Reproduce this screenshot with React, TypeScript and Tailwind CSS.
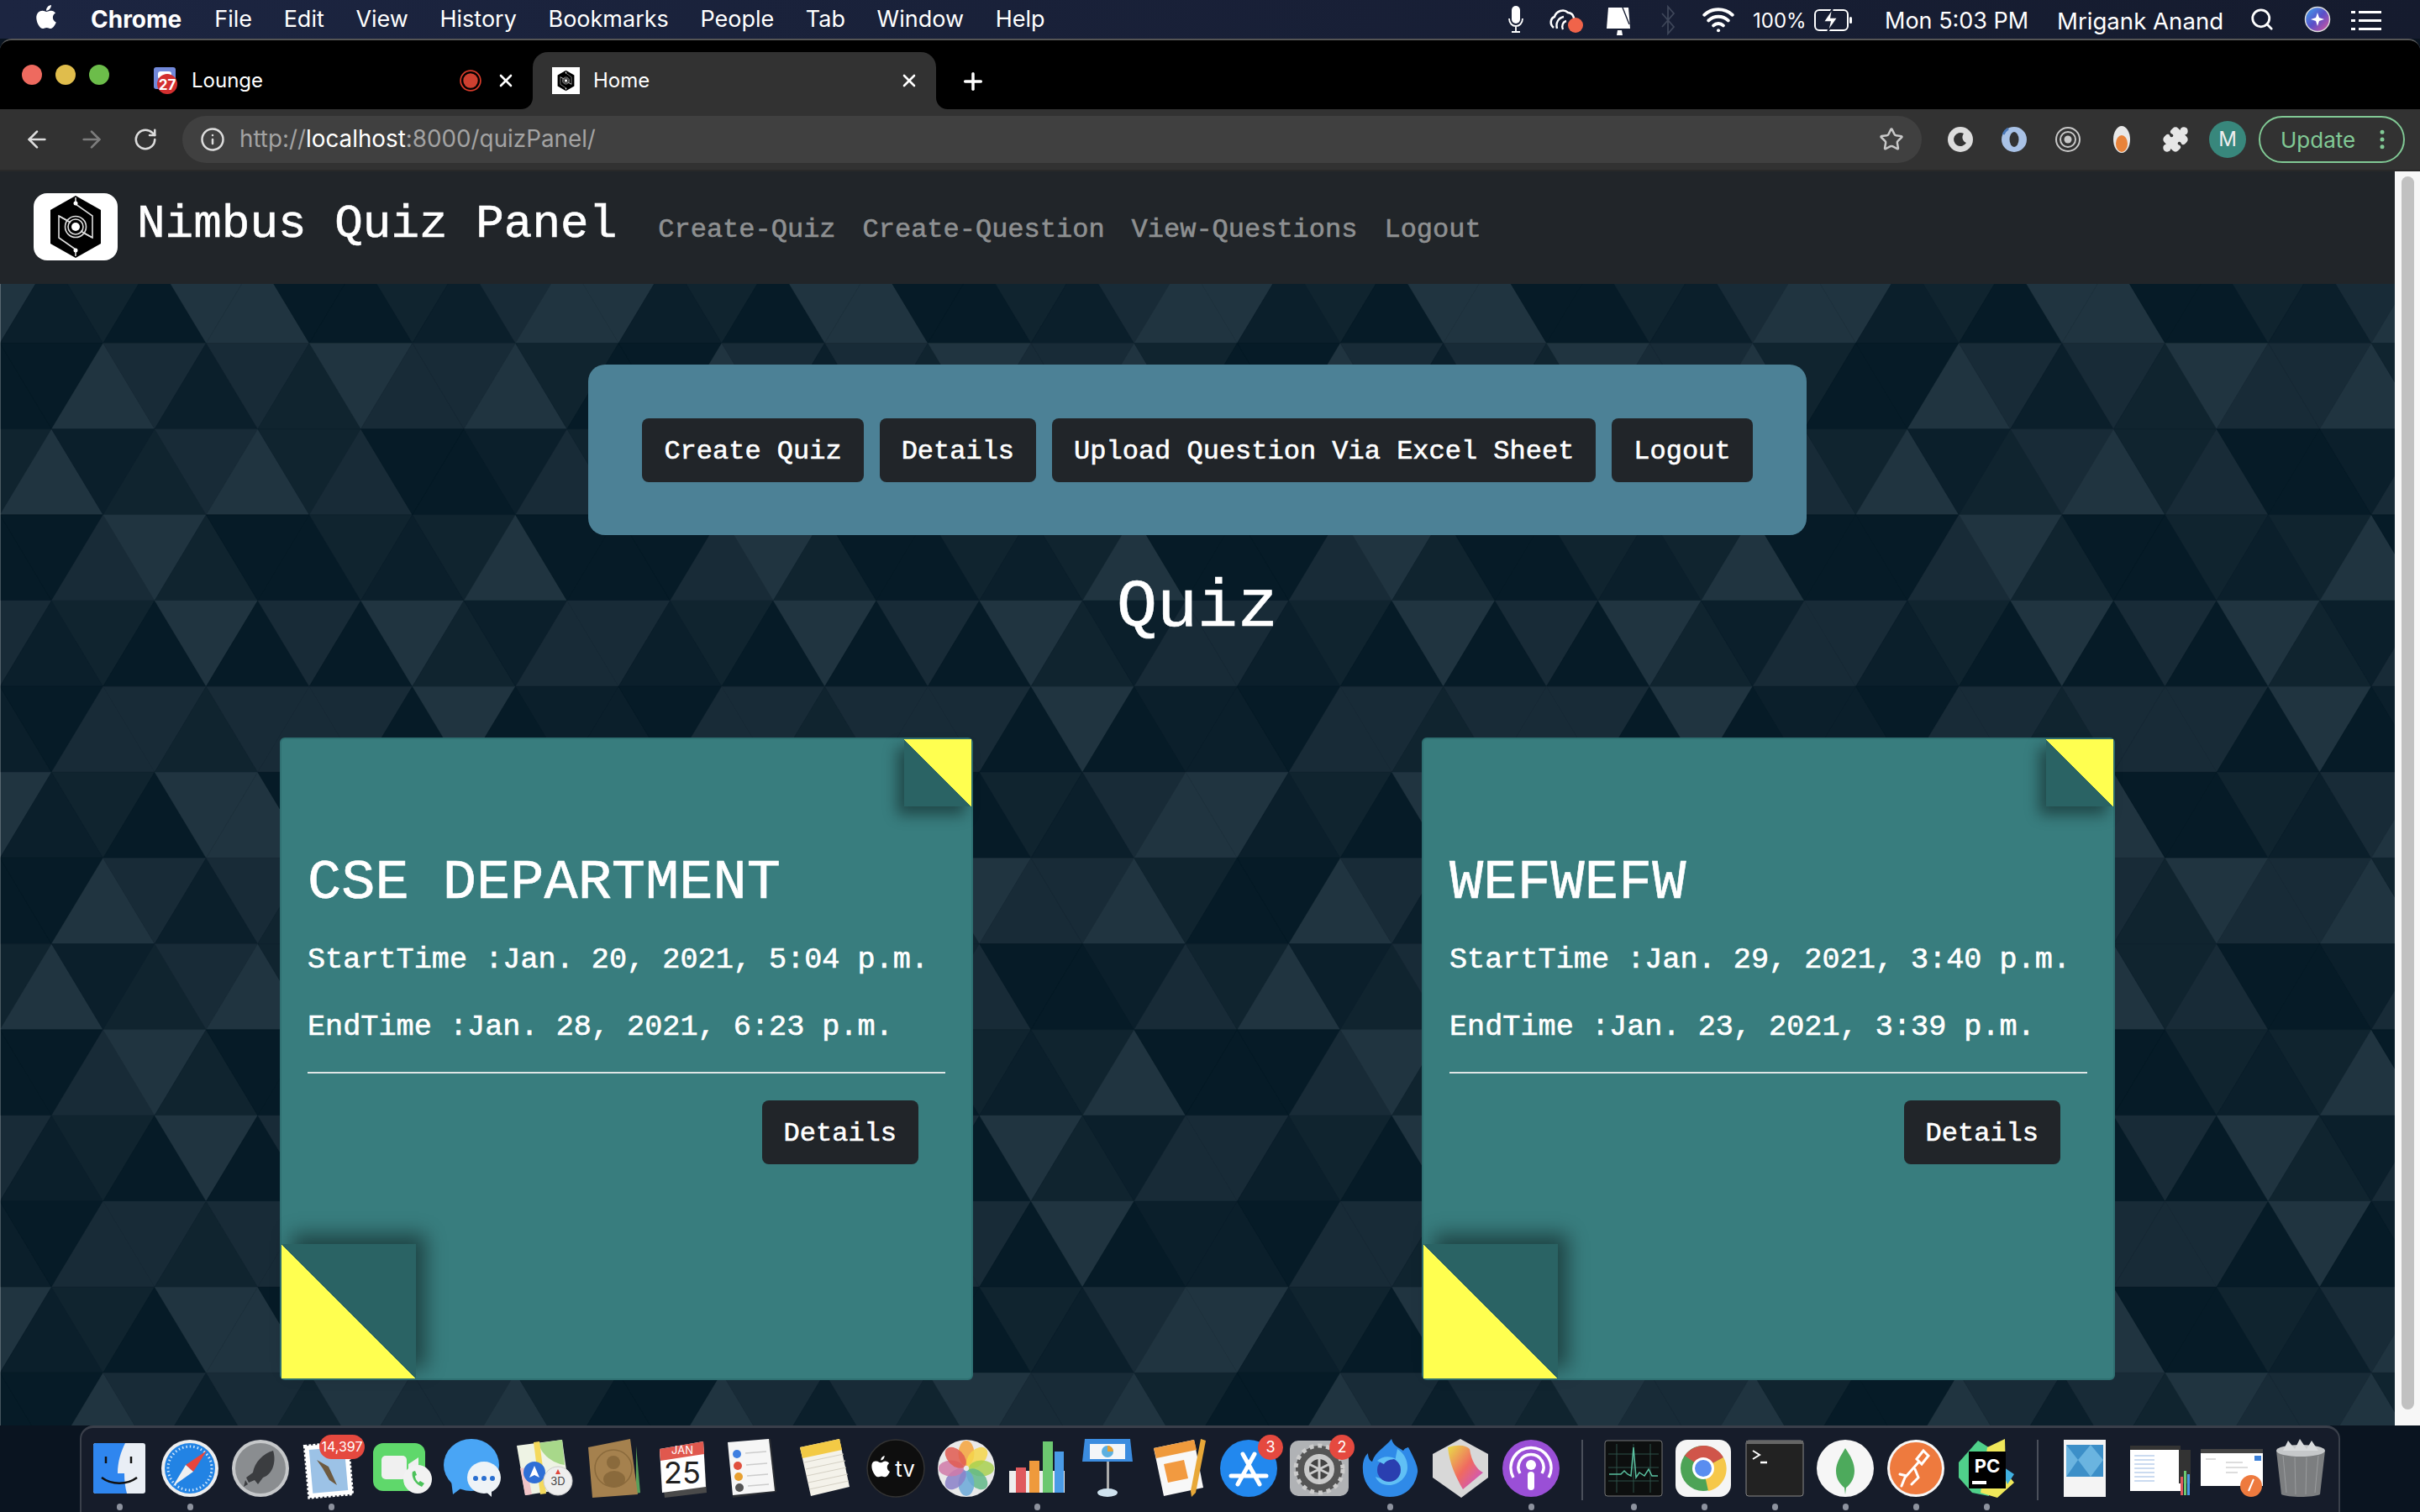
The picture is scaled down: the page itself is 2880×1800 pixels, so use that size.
import { ReactNode } from "react";
import { FaApple } from "react-icons/fa";
import { ArrowLeft, ArrowRight, Info, MoreVertical, Plus, Puzzle, RotateCw, Search, Star, Wifi, X } from "lucide-react";

// background tile: 6 rows of 12 triangles, repeats every 736 x 613
const TONES = ["#061b27", "#0b1f2b", "#10242f", "#182b37", "#203440"];
const TILE = [
  [4, 1, 2, 0, 4, 4, 0, 0, 2, 1, 3, 4],
  [0, 0, 4, 3, 1, 3, 2, 4, 3, 3, 4, 2],
  [2, 4, 1, 2, 3, 4, 2, 3, 0, 0, 1, 3],
  [0, 0, 3, 4, 2, 0, 0, 2, 1, 2, 4, 0],
  [3, 1, 2, 0, 4, 0, 3, 0, 4, 2, 1, 3],
  [1, 0, 3, 3, 2, 3, 3, 3, 0, 4, 0, 1],
];
const HALF = 61.35;
const ROW = 102.15;

function Triangles() {
  const polys = [];
  for (let r = 0; r < 15; r++) {
    const y = -31.6 + r * ROW;
    for (let c = -1; c < 49; c++) {
      const tone = TILE[r % 6][((c % 12) + 12) % 12];
      const odd = c % 2 !== 0;
      const pointsUp = r % 2 === 1 ? !odd : odd;
      const x = c * HALF;
      const pts = pointsUp
        ? `${x},${y} ${x - HALF},${y + ROW} ${x + HALF},${y + ROW}`
        : `${x - HALF},${y} ${x + HALF},${y} ${x},${y + ROW}`;
      polys.push(<polygon key={`${r}-${c}`} points={pts} fill={TONES[tone]} stroke={TONES[tone]} strokeWidth={0.4} />);
    }
  }
  return (
    <svg className="absolute inset-0 h-full w-full" aria-hidden="true">
      {polys}
    </svg>
  );
}

function NimbusLogo({ className }: { className: string }) {
  return (
    <svg viewBox="0 0 100 80" className={className}>
      <polygon points="50,3 80,20 80,60 50,77 20,60 20,20" fill="#000" />
      <g fill="none" stroke="#ddd" strokeWidth="1.6">
        <path d="M50 5v8l20 14v26l-11-6M50 75v-8L30 53V27l11 6" />
        <circle cx="50" cy="40" r="9" />
        <circle cx="50" cy="40" r="12.5" />
        <path d="M30 27l14 8M70 53L56 45" />
      </g>
      <circle cx="50" cy="40" r="5" fill="#fff" />
      <circle cx="50" cy="12" r="2.5" fill="#fff" />
      <circle cx="50" cy="68" r="2.5" fill="#fff" />
    </svg>
  );
}

function MenuIcons() {
  return (
    <>
      <svg viewBox="0 0 24 34" className="h-[34px] w-[24px] absolute left-[1792px] top-[6px]">
        <rect x="7" y="1" width="10" height="21" rx="5" fill="#fff" />
        <path d="M4 16c0 6 4 9 8 9s8-3 8-9M12 25v6M7 32h10" fill="none" stroke="#fff" strokeWidth="1.8" />
      </svg>
      <svg viewBox="0 0 44 34" className="h-[34px] w-[44px] absolute left-[1843px] top-[7px]">
        <path d="M6 26c-5-4-4-11 1-13 2-7 11-10 16-5 5 0 8 5 7 10" fill="none" stroke="#fff" strokeWidth="2.6" />
        <path d="M10 27c-2-7 2-13 8-14M17 28c-2-4 0-9 4-10" fill="none" stroke="#fff" strokeWidth="2.4" />
        <circle cx="32" cy="23" r="9" fill="#f0644a" />
      </svg>
      <svg viewBox="0 0 36 36" className="h-[36px] w-[36px] absolute left-[1909px] top-[6px]">
        <path d="M5 3h24l2 25H3z" fill="#fff" />
        <path d="M22 3l8 20" stroke="#1a2136" strokeWidth="1.4" />
        <path d="M16 30h5l1 6h-7z" fill="#fff" />
      </svg>
      <svg viewBox="0 0 20 36" className="h-[36px] w-[20px] absolute left-[1975px] top-[6px]">
        <path d="M3 10l14 16-7 8V2l7 8L3 26" fill="none" stroke="#3e4659" strokeWidth="1.8" />
      </svg>
      <Wifi size={40} strokeWidth={2.4} className="absolute left-[2025px] top-[3px] text-white" />
      <svg viewBox="0 0 46 30" className="h-[30px] w-[46px] absolute left-[2159px] top-[9px]">
        <rect x="1" y="3" width="39" height="24" rx="5" fill="none" stroke="#fff" strokeWidth="2" />
        <rect x="42" y="11" width="3" height="8" rx="1.5" fill="#fff" />
        <path d="M22 1L11 17h8l-3 12 12-17h-8z" fill="#fff" stroke="#1a2136" strokeWidth="1.6" />
      </svg>
      <Search size={30} strokeWidth={2.2} className="absolute left-[2677px] top-[8px] text-white" />
      <svg viewBox="0 0 32 32" className="h-[32px] w-[32px] absolute left-[2742px] top-[7px]">
        <defs>
          <linearGradient id="siri" x1="0" y1="0" x2="1" y2="1">
            <stop offset="0" stopColor="#3ea8f0" />
            <stop offset="0.5" stopColor="#5a4fc8" />
            <stop offset="1" stopColor="#e0559a" />
          </linearGradient>
        </defs>
        <circle cx="16" cy="16" r="14.5" fill="url(#siri)" stroke="#ddd" strokeWidth="1.5" />
        <path d="M16 8l2 6 6 2-6 2-2 6-2-6-6-2 6-2z" fill="#fff" />
      </svg>
      <svg viewBox="0 0 36 28" className="h-[28px] w-[36px] absolute left-[2798px] top-[11px]">
        <path d="M0 2h5v3H0zM9 2h27v3H9zM0 12h5v3H0zM9 12h27v3H9zM0 22h5v3H0zM9 22h27v3H9z" fill="#fff" />
      </svg>
    </>
  );
}

function MenuBar() {
  return (
    <div className="relative flex h-[46px] items-center bg-gradient-to-r from-[#1c2541] to-[#151b2e] pl-[39px] font-['Inter',sans-serif] text-[27px] text-white">
      <FaApple size={32} className="mr-[37px] -mt-[6px]" />
      <div className="mr-[39px] text-[28px] font-bold">Chrome</div>
      <div className="flex gap-[37.6px]">
        {["File", "Edit", "View", "History", "Bookmarks", "People", "Tab", "Window", "Help"].map((m) => (
          <span key={m}>{m}</span>
        ))}
      </div>
      <MenuIcons />
      <span className="absolute left-[2086px] top-[7px] text-[24px]">100%</span>
      <span className="absolute left-[2243px] top-[5px]">Mon 5:03 PM</span>
      <span className="absolute left-[2448px] top-[5px] text-[27.6px]">Mrigank Anand</span>
    </div>
  );
}

function TabBar() {
  return (
    <div className="flex h-[82px] items-end bg-black font-['Inter',sans-serif] text-[24px] text-white">
      <div className="flex h-full w-[182px] shrink-0 items-center gap-[16px] pl-[26px] pb-[0px]">
        <span className="h-[24px] w-[24px] rounded-full bg-[#ee6a5f]" />
        <span className="h-[24px] w-[24px] rounded-full bg-[#e0bd4c]" />
        <span className="h-[24px] w-[24px] rounded-full bg-[#6cbd4a]" />
      </div>
      <div className="flex h-[68px] w-[452px] shrink-0 items-center pr-[20px]">
        <svg viewBox="0 0 30 32" className="h-[32px] w-[30px] shrink-0">
          <rect x="1" y="0" width="26" height="26" rx="3" fill="#7289da" />
          <rect x="6" y="5" width="16" height="9" rx="3" fill="#fff" />
          <circle cx="17" cy="20" r="12" fill="#d32f2f" />
          <text x="17" y="27" textAnchor="middle" fontSize="17" fontWeight="700" fill="#fff">27</text>
        </svg>
        <span className="ml-[16px] flex-1">Lounge</span>
        <svg viewBox="0 0 24 24" className="h-[26px] w-[26px]">
          <circle cx="12" cy="12" r="11" fill="none" stroke="#d63b2a" strokeWidth="1.6" />
          <circle cx="12" cy="12" r="8" fill="#cf4030" />
        </svg>
        <X size={24} strokeWidth={2.6} className="ml-[17px]" />
      </div>
      <div className="relative flex h-[68px] w-[480px] shrink-0 items-center rounded-t-[18px] bg-[#323232] pl-[23px] pr-[20px]">
        <svg viewBox="0 0 14 14" className="absolute -left-[14px] bottom-0 h-[14px] w-[14px]">
          <path d="M14 0v14H0C8 14 14 8 14 0z" fill="#323232" />
        </svg>
        <svg viewBox="0 0 14 14" className="absolute -right-[14px] bottom-0 h-[14px] w-[14px]">
          <path d="M0 0v14h14C6 14 0 8 0 0z" fill="#323232" />
        </svg>
        <div className="h-[32px] w-[33px] shrink-0 bg-white">
          <NimbusLogo className="h-full w-full" />
        </div>
        <span className="ml-[16px] flex-1">Home</span>
        <X size={24} strokeWidth={2.6} />
      </div>
      <Plus size={32} strokeWidth={2.6} className="mb-[17px] ml-[28px]" />
    </div>
  );
}

function ExtensionIcons() {
  return (
    <>
      <svg viewBox="0 0 32 32" className="h-[32px] w-[32px] shrink-0">
        <circle cx="16" cy="16" r="15" fill="#dcdcdc" />
        <path d="M20 9a8 8 0 1 0 3 11 7 7 0 0 1-3-11z" fill="#323232" />
      </svg>
      <svg viewBox="0 0 32 32" className="h-[32px] w-[32px] shrink-0">
        <circle cx="16" cy="16" r="15" fill="#a9c2e6" />
        <ellipse cx="16" cy="16" rx="5.5" ry="9" fill="#323232" />
        <path d="M3 10a15 15 0 0 1 6-7" stroke="#4a78b8" strokeWidth="3" fill="none" />
      </svg>
      <svg viewBox="0 0 32 32" className="h-[32px] w-[32px] shrink-0">
        <g fill="none" stroke="#c8c8c8" strokeWidth="2">
          <circle cx="16" cy="16" r="14" />
          <circle cx="16" cy="16" r="9" />
        </g>
        <circle cx="16" cy="16" r="4.5" fill="#c8c8c8" />
      </svg>
      <svg viewBox="0 0 32 34" className="h-[34px] w-[32px] shrink-0">
        <ellipse cx="16" cy="17" rx="10" ry="16" fill="#e8e8e8" />
        <ellipse cx="16" cy="22" rx="7" ry="10" fill="#e8833a" />
      </svg>
      <Puzzle size={32} fill="#e6e6e6" stroke="#e6e6e6" className="shrink-0" />
    </>
  );
}

function Toolbar() {
  return (
    <div className="flex h-[74px] items-center border-b-2 border-[#292929] bg-[#323232] font-['Inter',sans-serif]">
      <div className="flex w-[217px] shrink-0 items-center gap-[33px] pl-[28px]">
        <ArrowLeft size={32} className="text-[#dcdcdc]" />
        <ArrowRight size={32} className="text-[#7d7d7d]" />
        <RotateCw size={30} className="text-[#dcdcdc]" />
      </div>
      <div className="flex h-[56px] w-[2070px] shrink-0 items-center rounded-full bg-[#404040] pl-[21px] pr-[21px]">
        <Info size={30} className="text-[#dcdcdc]" />
        <div className="ml-[17px] flex-1 text-[27.8px] text-[#a3a3a3]">
          http://<span className="text-white">localhost</span>:8000/quizPanel/
        </div>
        <Star size={30} className="text-[#c8c8c8]" />
      </div>
      <div className="ml-[30px] flex w-[316px] shrink-0 items-center gap-[32px]">
        <ExtensionIcons />
      </div>
      <div className="flex h-[44px] w-[44px] shrink-0 items-center justify-center rounded-full bg-[#38877c] text-[24px] text-[#eee] -ml-[4px]">M</div>
      <div className="ml-[15px] flex h-[56px] w-[174px] shrink-0 items-center justify-between rounded-full border-2 border-[#81c995] pl-[24px] pr-[10px] text-[26px] text-[#81c995]">
        Update
        <MoreVertical size={30} />
      </div>
    </div>
  );
}

function DarkButton({ children }: { children: ReactNode }) {
  return (
    <button className="flex h-[76px] items-center whitespace-nowrap rounded-lg bg-[#212529] px-[26px] pt-[4px] text-[32px] leading-[48px] text-white">
      {children}
    </button>
  );
}

function QuizCard({ name, start, end }: { name: string; start: string; end: string }) {
  return (
    <div className="relative h-[765px] w-[825px] rounded-md border-2 border-[#2f7072] bg-[#387d7e] px-[31px] pt-[131px]">
      <div className="absolute right-0 top-0 h-[80px] w-[80px] bg-[linear-gradient(45deg,#2a6364_50%,#ffff50_50%)] shadow-[-8px_10px_16px_rgba(0,0,0,0.42)]" />
      <div className="absolute bottom-0 left-0 h-[160px] w-[160px] bg-[linear-gradient(45deg,#ffff50_50%,#2a6364_50%)] shadow-[12px_-12px_22px_rgba(0,0,0,0.45)]" />
      <h2 className="text-[67px] leading-[80px] text-white">{name}</h2>
      <p className="mt-[30px] text-[35.2px] leading-[44px] text-white">StartTime :{start}</p>
      <p className="mt-[36px] text-[35.2px] leading-[44px] text-white">EndTime :{end}</p>
      <div className="mt-[31px] h-[2px] bg-[#dfe6e6]" />
      <div className="mt-[32px] flex justify-end pr-[32px]">
        <DarkButton>Details</DarkButton>
      </div>
    </div>
  );
}

function Page() {
  return (
    <div className="relative flex min-h-0 min-w-0 flex-1 flex-col overflow-hidden">
      <Triangles />
      <div className="absolute inset-y-0 left-0 w-px bg-white/25" />
      <div className="relative flex flex-col items-center">
        <div className="mt-[96px] flex gap-[19px] rounded-[20px] bg-[#4c8196] p-[64px] pb-[63px]">
          <DarkButton>Create Quiz</DarkButton>
          <DarkButton>Details</DarkButton>
          <DarkButton>Upload Question Via Excel Sheet</DarkButton>
          <DarkButton>Logout</DarkButton>
        </div>
        <h1 className="mt-[39px] text-[80px] leading-[96px] text-white">Quiz</h1>
        <div className="mt-[106px] flex justify-center gap-[534px]">
          <QuizCard name="CSE DEPARTMENT" start="Jan. 20, 2021, 5:04 p.m." end="Jan. 28, 2021, 6:23 p.m." />
          <QuizCard name="WEFWEFW" start="Jan. 29, 2021, 3:40 p.m." end="Jan. 23, 2021, 3:39 p.m." />
        </div>
      </div>
    </div>
  );
}

function Nav() {
  return (
    <div className="flex h-[134px] shrink-0 items-start bg-[#212529]">
      <div className="ml-[40px] mt-[26px] h-[80px] w-[100px] rounded-[16px] bg-white">
        <NimbusLogo className="h-full w-full" />
      </div>
      <div className="ml-[23px] mt-[31px] text-[56px] leading-[64px] text-white">Nimbus Quiz Panel</div>
      <div className="ml-[49px] mt-[46px] flex gap-[32px] text-[32px] leading-[48px] text-[#8e9091]">
        <span>Create-Quiz</span>
        <span>Create-Question</span>
        <span>View-Questions</span>
        <span>Logout</span>
      </div>
    </div>
  );
}

// dock icons, all on a 70 x 70 box
const DOCK_ICONS: Record<string, ReactNode> = {
  finder: (
    <>
      <rect x="4" y="5" width="62" height="60" rx="3" fill="#e9eef5" />
      <path d="M7 5h35c-5 10-9 22-9 36h8c0 9 1 17 3 24H7a3 3 0 0 1-3-3V8a3 3 0 0 1 3-3z" fill="#2f86ef" />
      <path d="M19 21v8M49 21v8" stroke="#111" strokeWidth="2.5" />
      <path d="M14 46c12 9 30 9 42 0" stroke="#111" strokeWidth="2.5" fill="none" />
    </>
  ),
  safari: (
    <>
      <circle cx="35" cy="35" r="34" fill="#eee" />
      <circle cx="35" cy="35" r="30" fill="#2283e4" />
      <circle cx="35" cy="35" r="26" fill="none" stroke="#cfe6fb" strokeWidth="3" strokeDasharray="1.5 3" />
      <path d="M55 14L30 31l9 8z" fill="#e8453c" />
      <path d="M15 56l15-25 9 8z" fill="#f1f1f1" />
    </>
  ),
  launchpad: (
    <>
      <circle cx="35" cy="35" r="34" fill="#c6c8ca" />
      <circle cx="35" cy="35" r="30" fill="#8a8d90" />
      <path d="M50 14c-12 3-22 14-24 26l-8 6 3 6 7-3 4 5 6-8c12-4 16-20 12-32zM20 54l-5 3 2-8z" fill="#3b3d40" />
    </>
  ),
  mail: (
    <>
      <rect x="6" y="6" width="52" height="62" fill="#fff" stroke="#fff" strokeWidth="3" strokeDasharray="3 2" transform="rotate(-5 32 37)" />
      <rect x="11" y="11" width="42" height="52" fill="#9cc2e6" transform="rotate(-5 32 37)" />
      <path d="M18 25l14 8 10 22-9-6-8-14z" fill="#6d5a40" />
      <rect x="21" y="-5" width="54" height="29" rx="14.5" fill="#e5493f" />
      <text x="48" y="15" textAnchor="middle" fontSize="16" fill="#fff">14,397</text>
    </>
  ),
  facetime: (
    <>
      <rect x="1" y="5" width="62" height="57" rx="12" fill="#5fd86b" />
      <rect x="11" y="20" width="30" height="28" rx="5" fill="#f0f0f0" />
      <path d="M43 30l12-8v24l-12-8z" fill="#f0f0f0" />
      <circle cx="54" cy="48" r="17" fill="#f2f2f2" />
      <path d="M48 39c-2 6 3 15 11 18l3-4-5-3-2 2c-2-2-4-5-4-8l2-1-2-5z" fill="#4cc25a" />
    </>
  ),
  messages: (
    <>
      <ellipse cx="34" cy="31" rx="33" ry="31" fill="#49a5f5" />
      <path d="M10 50l2 16 12-9z" fill="#49a5f5" />
      <ellipse cx="49" cy="46" rx="20" ry="19" fill="#eef3f7" />
      <path d="M48 60l10 9v-13z" fill="#eef3f7" />
      <g fill="#2a6fd0"><circle cx="39" cy="47" r="3" /><circle cx="49" cy="47" r="3" /><circle cx="59" cy="47" r="3" /></g>
    </>
  ),
  maps: (
    <>
      <path d="M4 8l54-7 8 58-52 8z" fill="#eef3e4" />
      <path d="M30 5l28-4 3 30c-14-2-28-12-31-26z" fill="#a8d88a" />
      <path d="M8 35l8-1 6 32-8 1z" fill="#f2c4c8" />
      <path d="M24 4l7-1 8 62-7 1z" fill="#f4d95c" />
      <circle cx="25" cy="40" r="13" fill="#2f6fd6" />
      <path d="M25 32l6 14-6-3-6 3z" fill="#fff" />
      <circle cx="53" cy="50" r="17" fill="#eee" stroke="#ccc" />
      <path d="M53 36l3 6h-6z" fill="#e0453a" />
      <text x="53" y="55" textAnchor="middle" fontSize="13" fill="#444">3D</text>
    </>
  ),
  contacts: (
    <>
      <path d="M62 8l5 56-5 1z" fill="#58a05a" />
      <path d="M5 10L55 0l9 66-54 4z" fill="#a5814e" />
      <circle cx="35" cy="28" r="8" fill="#8a6a3c" />
      <ellipse cx="36" cy="48" rx="13" ry="10" fill="#8a6a3c" />
      <circle cx="35" cy="35" r="22" fill="none" stroke="#8a6a3c" strokeWidth="1.5" />
    </>
  ),
  calendar: (
    <>
      <path d="M6 14L58 4l4 60-50 6z" fill="#4a4a4a" />
      <path d="M6 12l52-9 3 54-52 7z" fill="#fff" />
      <path d="M6 12l52-9 1 15-52 8z" fill="#e0584e" />
      <text x="33" y="18" textAnchor="middle" fontSize="13" fill="#fff">JAN</text>
      <text x="33" y="53" textAnchor="middle" fontSize="36" fill="#222">25</text>
    </>
  ),
  reminders: (
    <>
      <path d="M4 5l50-5 7 63-52 7z" fill="#3a3a3a" opacity="0.6" />
      <path d="M3 4l49-4 7 62-50 5z" fill="#f6f6f6" />
      <circle cx="14" cy="18" r="5" fill="#3f7fe0" />
      <circle cx="15" cy="32" r="5" fill="#e0503e" />
      <circle cx="16" cy="45" r="5" fill="#e8a030" />
      <circle cx="17" cy="58" r="5" fill="#555" />
      <path d="M24 17l25-2M25 31l25-2M26 44l25-2M27 56l25-2" stroke="#ccc" strokeWidth="1.5" />
    </>
  ),
  notes: (
    <>
      <path d="M5 10L52 0l12 57-46 11z" fill="#f4f2ea" />
      <path d="M5 10L52 0l3 13-47 10z" fill="#f3ca45" />
      <path d="M10 28l47-10M12 36l47-10M13 44l47-10M15 52l47-10M16 60l47-10" stroke="#d4d0c4" strokeWidth="1" />
    </>
  ),
  tv: (
    <>
      <circle cx="35" cy="35" r="34" fill="#0e0e0e" stroke="#333" strokeWidth="1.5" />
      <path d="M22 26c3 0 4 2 6 2s3-2 6-2c2 0 4 1 5 3-4 3-3 9 1 11-2 4-4 7-6 7s-3-1-5-1-3 1-5 1c-3 0-8-8-8-14s3-7 6-7zM28 25c0-3 2-5 5-6 0 3-2 6-5 6z" fill="#fff" transform="translate(-8 3) scale(0.9)" />
      <text x="46" y="45" textAnchor="middle" fontSize="26" fill="#fff">tv</text>
    </>
  ),
  photos: (
    <>
      <circle cx="35" cy="35" r="34" fill="#e9e9e9" />
      {["#f4a33c", "#f5d64a", "#a8d050", "#62b888", "#6aa8d8", "#8a80c8", "#d07aa8", "#e05a50"].map((c, i) => (
        <ellipse key={c} cx="35" cy="17" rx="9.5" ry="15" fill={c} opacity="0.85" transform={`rotate(${i * 45} 35 35)`} />
      ))}
    </>
  ),
  numbers: (
    <>
      <path d="M2 38h66v26H2z" fill="#eee" />
      <rect x="10" y="34" width="12" height="30" fill="#e05a5e" />
      <rect x="26" y="26" width="12" height="38" fill="#ef9a3c" />
      <rect x="42" y="3" width="12" height="61" fill="#6cc870" />
      <rect x="56" y="15" width="11" height="49" fill="#4a9be6" />
    </>
  ),
  keynote: (
    <>
      <path d="M8 0h54l3 27H5z" fill="#3b8cdf" />
      <rect x="14" y="6" width="42" height="18" fill="#f4f6f8" />
      <circle cx="35" cy="15" r="7" fill="#5cb0e0" />
      <path d="M35 15V8a7 7 0 0 1 7 7z" fill="#e8a030" />
      <path d="M34 27h3v35h-3z" fill="#aaa" />
      <ellipse cx="35" cy="64" rx="12" ry="5" fill="#cfe2ee" />
    </>
  ),
  pages: (
    <>
      <path d="M6 11L54 1l11 57-47 10z" fill="#f8f8f8" />
      <path d="M6 11L54 1l3 12-48 10z" fill="#ef9a3c" />
      <path d="M18 30l24-5 5 22-24 5z" fill="#f29a40" />
      <path d="M62 0l6 2-12 62-5 5-1-7z" fill="#e8a838" />
    </>
  ),
  appstore: (
    <>
      <circle cx="35" cy="35" r="34" fill="#2288ee" />
      <path d="M28 18l20 36M42 18L22 54M14 44h42" stroke="#fff" strokeWidth="5" strokeLinecap="round" />
      <rect x="46" y="-5" width="30" height="30" rx="15" fill="#e5493f" />
      <text x="61" y="16" textAnchor="middle" fontSize="18" fill="#fff">3</text>
    </>
  ),
  sysprefs: (
    <>
      <rect x="0" y="2" width="70" height="66" rx="10" fill="#b0b2b5" />
      <circle cx="35" cy="36" r="28" fill="#555" />
      <circle cx="35" cy="36" r="28" fill="none" stroke="#ccc" strokeWidth="5" strokeDasharray="5 5" />
      <circle cx="35" cy="36" r="18" fill="#c9c9c9" />
      <circle cx="35" cy="36" r="12" fill="#444" />
      <path d="M35 18v36M19 28l32 16M19 44l32-16" stroke="#ccc" strokeWidth="3" />
      <rect x="47" y="-5" width="30" height="30" rx="15" fill="#e5493f" />
      <text x="62" y="16" textAnchor="middle" fontSize="18" fill="#fff">2</text>
    </>
  ),
  firefox: (
    <>
      <path d="M35 69C14 69 1 52 3 30c1-7 3-10 6-13 0 5 2 9 5 10C18 14 30 10 37 0c2 8 8 10 14 14 2-3 3-3 6-4 8 15 12 24 11 30-3 18-15 29-33 29z" fill="#2f8ae8" />
      <path d="M44 12c8 5 12 13 12 22 0 11-10 21-22 21-8 0-14-4-16-10 8 4 16 2 20-4z" fill="#60c0f5" />
      <circle cx="34" cy="37" r="14" fill="#2a3fb0" />
      <path d="M20 26c6-6 16-6 22-2-6 0-12 2-14 6z" fill="#60c0f5" />
    </>
  ),
  grapher: (
    <>
      <defs>
        <linearGradient id="graph" x1="0" y1="0" x2="1" y2="1">
          <stop offset="0" stopColor="#e8e048" />
          <stop offset="0.5" stopColor="#f06a60" />
          <stop offset="1" stopColor="#c050e0" />
        </linearGradient>
      </defs>
      <path d="M35 0l33 18v28L36 70 2 46V18z" fill="#d8d8d8" />
      <path d="M20 10c14-4 22-2 26 2 2 14 8 24 16 28L38 60C30 46 22 30 20 10z" fill="url(#graph)" />
    </>
  ),
  podcasts: (
    <>
      <circle cx="35" cy="35" r="34" fill="#9a4fd6" />
      <g fill="none" stroke="#fff" strokeWidth="3.5">
        <path d="M14 46a24 24 0 1 1 42 0" />
        <path d="M22 41a15 15 0 1 1 26 0" />
      </g>
      <circle cx="35" cy="31" r="6" fill="#fff" />
      <rect x="31" y="39" width="8" height="22" rx="4" fill="#fff" />
    </>
  ),
  activity: (
    <>
      <rect x="1" y="2" width="68" height="66" rx="3" fill="#0d0f0f" stroke="#777" strokeWidth="1" />
      <g stroke="#2d5048" strokeWidth="1">
        <path d="M5 18h60M5 34h60M5 50h60M15 6v58M35 6v58M55 6v58" />
      </g>
      <path d="M6 42h14l4-4 4 4 4 2 3-34 3 36 4-6 6 4 5-8 4 8h7" fill="none" stroke="#5ac0a0" strokeWidth="1.5" />
    </>
  ),
  chrome: (
    <>
      <rect x="1" y="1" width="66" height="68" rx="14" fill="#f5f5f5" />
      <circle cx="34" cy="35" r="27" fill="#4da356" />
      <path d="M34 35L58 22a27 27 0 0 0-46-2z" fill="#d0554a" />
      <path d="M34 35l24-13a27 27 0 0 1-18 40z" fill="#f6c84a" />
      <circle cx="34" cy="35" r="13" fill="#fff" />
      <circle cx="34" cy="35" r="10" fill="#5a8df0" />
    </>
  ),
  terminal: (
    <>
      <rect x="1" y="2" width="68" height="66" rx="3" fill="#222" stroke="#888" strokeWidth="1" />
      <rect x="1" y="2" width="68" height="4" fill="#666" />
      <path d="M9 14l8 5-8 5" fill="none" stroke="#fff" strokeWidth="2" />
      <path d="M18 28h8" stroke="#fff" strokeWidth="2.5" />
    </>
  ),
  mongo: (
    <>
      <circle cx="35" cy="35" r="34" fill="#f6f6f6" />
      <path d="M35 11c7 10 11 18 11 27 0 10-6 17-10 20l-1 8-1-8c-5-4-10-10-10-20 0-9 5-17 11-27z" fill="#4daa5c" />
    </>
  ),
  postman: (
    <>
      <circle cx="35" cy="35" r="34" fill="#f7f7f7" />
      <circle cx="35" cy="35" r="31" fill="#ee7a3e" />
      <g stroke="#fff" strokeWidth="3" fill="none" strokeLinecap="round">
        <path d="M44 14l6 6-8 10-6-6zM38 28L22 46l-4 10M34 36l4 10-8 8M24 44l-8-2" />
      </g>
    </>
  ),
  pycharm: (
    <>
      <path d="M2 28L25 2l19 12-6 54-20-4-16-18z" fill="#4fd08a" />
      <path d="M36 10L57 0l1 40 10 12-20 18-20-6z" fill="#f0e85a" />
      <path d="M50 30l18 12-8 12z" fill="#40b0e0" />
      <rect x="14" y="15" width="44" height="44" fill="#000" />
      <text x="36" y="40" textAnchor="middle" fontSize="22" fontWeight="700" fill="#fff">PC</text>
      <rect x="18" y="50" width="17" height="4" fill="#fff" />
    </>
  ),
  doc1: (
    <>
      <rect x="5" y="1" width="50" height="68" fill="#f4f4f4" />
      <path d="M8 7h44v38H8z" fill="#3c8fc8" />
      <path d="M8 7l14 18L8 45zM22 25l15-18 15 18-15 20z" fill="#6ab4e0" />
    </>
  ),
  doc2: (
    <>
      <rect x="0" y="8" width="60" height="54" fill="#fff" />
      <rect x="0" y="8" width="60" height="5" fill="#333" />
      <rect x="58" y="13" width="14" height="40" fill="#333" />
      <g stroke="#a8c4e6" strokeWidth="1.2">
        {[20, 25, 30, 35, 40, 45, 50].map((y) => <path key={y} d={`M5 ${y}h24`} />)}
      </g>
      <rect x="60" y="45" width="3" height="22" fill="#e05a5e" />
      <rect x="64" y="38" width="3" height="29" fill="#6cc870" />
      <rect x="68" y="42" width="3" height="25" fill="#4a9be6" />
    </>
  ),
  doc3: (
    <>
      <rect x="0" y="12" width="74" height="44" fill="#fff" />
      <rect x="0" y="12" width="74" height="5" fill="#444" />
      <path d="M6 24h12M30 28h20M30 34h26M30 40h14" stroke="#bbb" strokeWidth="1.2" />
      <rect x="64" y="20" width="8" height="6" fill="#3a7fd8" />
      <circle cx="60" cy="56" r="13" fill="#ee7a3e" />
      <path d="M63 48l-6 14" stroke="#fff" strokeWidth="2" />
    </>
  ),
  trash: (
    <>
      <path d="M6 14l6 52c8 4 38 4 46 0l6-52z" fill="#7c7e80" />
      <path d="M14 20l4 44M28 22l1 44M42 22l-1 44M56 20l-4 44" stroke="#9a9c9e" strokeWidth="1" />
      <ellipse cx="35" cy="14" rx="29" ry="7" fill="#c6c8ca" />
      <path d="M14 14l6-12 8 10 6-12 8 12 6-10 8 12z" fill="#d8dadc" />
    </>
  ),
};

function DockIcon({ name, running }: { name: string; running?: boolean }) {
  return (
    <div className="flex w-[84px] shrink-0 flex-col items-center pt-[13px]">
      <svg viewBox="0 0 70 70" className="h-[70px] w-[70px] overflow-visible font-['Inter',sans-serif]">
        {DOCK_ICONS[name]}
      </svg>
      <span className={running ? "mt-[7px] h-[8px] w-[7px] rounded-full bg-[#8d929e]" : "mt-[7px] h-[8px] w-[7px]"} />
    </div>
  );
}

function Dock() {
  return (
    <div className="flex h-[103px] shrink-0 bg-[#0a1420]">
      <div className="mx-[95px] flex flex-1 rounded-t-[16px] border-x-2 border-t-[3px] border-[#3a3f4a] bg-[#161c2a] pl-[3px]">
        {["finder", "safari", "launchpad", "mail", "facetime", "messages", "maps", "contacts", "calendar", "reminders", "notes", "tv", "photos", "numbers", "keynote", "pages", "appstore", "sysprefs", "firefox", "grapher", "podcasts"].map((n) => (
          <DockIcon key={n} name={n} running={["finder", "safari", "mail", "numbers", "firefox", "podcasts"].includes(n)} />
        ))}
        <div className="mx-[18px] my-[14px] w-[2px] shrink-0 bg-[#4a4f5a]" />
        {["activity", "chrome", "terminal", "mongo", "postman", "pycharm"].map((n) => (
          <DockIcon key={n} name={n} running />
        ))}
        <div className="mx-[18px] my-[14px] w-[2px] shrink-0 bg-[#4a4f5a]" />
        {["doc1", "doc2", "doc3", "trash"].map((n) => (
          <DockIcon key={n} name={n} />
        ))}
      </div>
    </div>
  );
}

export default function App() {
  return (
    <div className="flex h-screen w-screen flex-col overflow-hidden bg-[#0a1420]">
      <MenuBar />
      <div className="flex min-h-0 flex-1 flex-col overflow-hidden rounded-t-[14px] border-t-2 border-[#555]">
        <TabBar />
        <Toolbar />
        <div className="flex min-h-0 flex-1">
          <div className="flex min-w-0 flex-1 flex-col font-['Liberation_Mono',monospace] [-webkit-text-stroke-width:0.6px]">
            <Nav />
            <Page />
          </div>
          <div className="w-[30px] shrink-0 bg-[#f7f7f7] pl-[8px] pt-[6px]">
            <div className="h-[1468px] w-[15px] rounded-full bg-[#c1c1c1]" />
          </div>
        </div>
      </div>
      <Dock />
    </div>
  );
}
